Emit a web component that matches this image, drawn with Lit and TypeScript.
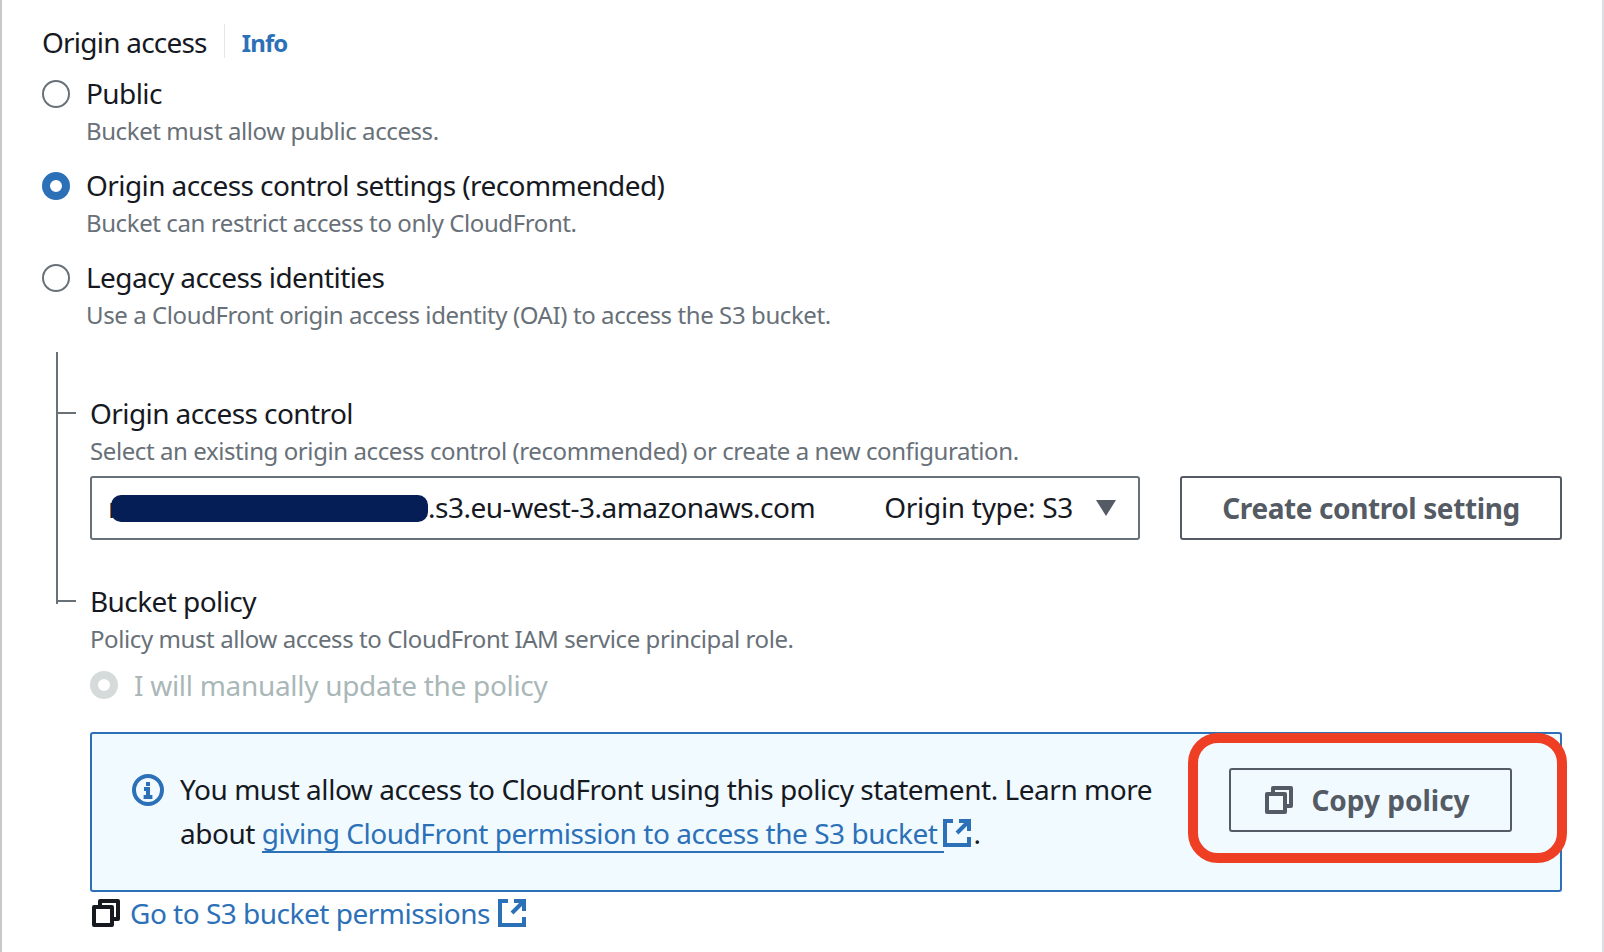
import { LitElement, html, css, svg } from "lit";
import { customElement } from "lit/decorators.js";

const copyIcon = (cls: string) => html`<svg class="ico ${cls}" viewBox="0 0 16 16" fill="none" stroke="currentColor" stroke-width="2" stroke-linejoin="round">${svg`<path d="M2 5h9v9H2z"/><path d="M5 5V2h9v9h-3"/>`}</svg>`;
const extIcon = html`<svg class="ico ext" viewBox="0 0 16 16" fill="none" stroke="currentColor" stroke-width="2">${svg`<path d="M9 2h5v5"/><path d="M14 2L8 8"/><path d="M6 2H2v12h12v-4"/>`}</svg>`;
const infoIcon = html`<svg class="ico info" viewBox="0 0 16 16" fill="none" stroke="currentColor" stroke-width="2">${svg`<circle cx="8" cy="8" r="7"/><path d="M8 11.5V7.5H6"/><path d="M10.2 11.5H5.8"/><path d="M7 5h2" stroke-width="2"/>`}</svg>`;

@customElement("app-root")
export class AppRoot extends LitElement {
  static styles = css`
    :host {
      display: block;
      width: 1604px;
      height: 952px;
      box-sizing: border-box;
      background: #fff;
      border-left: 2px solid #c6cacd;
      border-right: 2px solid #dcdfe1;
      padding: 24px 0 0 40px;
      overflow: hidden;
      font-family: "Noto Sans", sans-serif;
      font-size: 28px;
      letter-spacing: -0.58px;
      color: #16191f;
    }
    .head { display: flex; align-items: center; height: 34px; margin-bottom: 17px; }
    .head .t { line-height: 38px; padding-top: 1px; letter-spacing: -0.78px; }
    .sep { width: 1px; height: 34px; background: #e4e7e9; margin: 0 17px; }
    .info-link { color: #2c71b8; font-weight: 700; font-size: 24px; letter-spacing: -0.9px; padding-top: 3px; }
    .opt { display: flex; margin-bottom: 16px; }
    .radio {
      width: 28px; height: 28px; box-sizing: border-box; border-radius: 50%;
      border: 2px solid #687078; margin: 5px 16px 0 0; flex: none; background: #fff;
    }
    .radio.on { border: 8.5px solid #2c71b8; }
    .radio.off { border: 8.5px solid #d5dbdb; margin-right: 16px; }
    .l { line-height: 36px; padding-bottom: 2px; }
    .d { line-height: 36px; padding-bottom: 2px; color: #687078; font-size: 24px; letter-spacing: -0.41px; }
    .tree { position: relative; margin: 17px 0 0 48px; padding-top: 43px; }
    .tree::before {
      content: ""; position: absolute; left: -34px; top: 0; width: 2px; height: 252px; background: #687078;
    }
    .title { position: relative; }
    .title::before {
      content: ""; position: absolute; left: -34px; top: 17px; width: 20px; height: 2px; background: #687078;
    }
    .row { display: flex; gap: 40px; width: 1472px; margin-top: 5px; height: 64px; }
    .select {
      flex: 1; display: flex; align-items: center; box-sizing: border-box; padding: 0 22px 2px 16px;
      border: 2px solid #687078; border-radius: 3px; letter-spacing: -0.5px;
    }
    .redact { width: 317px; height: 27px; margin-top: 2px; background: #051f56; border-radius: 10px; margin-left: -8px; flex: none; }
    .type { margin-left: auto; letter-spacing: -0.3px; }
    .caret {
      margin-left: 23px; margin-top: 2px; width: 0; height: 0; border-left: 10px solid transparent;
      border-right: 10px solid transparent; border-top: 16px solid #545b64;
    }
    .btn {
      display: flex; align-items: center; justify-content: center; box-sizing: border-box;
      border: 2px solid #545b64; border-radius: 3px; color: #545b64; font-weight: 700;
    }
    .create { width: 382px; letter-spacing: -0.4px; }
    .bp { margin-top: 43px; }
    .dis { display: flex; margin-top: 8px; color: #aab7b8; letter-spacing: -0.3px; }
    .dis .radio { margin-top: 4px; }
    .box {
      position: relative; display: flex; align-items: flex-start; box-sizing: border-box;
      width: 1472px; height: 160px; margin-top: 27px; padding: 34px 48px 0 40px;
      background: #f1faff; border: 2px solid #2c71b8; border-radius: 3px;
    }
    .ico { display: block; flex: none; }
    .info { width: 32px; height: 32px; color: #2c71b8; margin: 6px 16px 0 0; }
    .msg { flex: 1; margin-top: -1px; line-height: 44px; white-space: nowrap; letter-spacing: -0.46px; }
    a { color: #2c71b8; text-decoration: none; }
    .ulink { display: inline-block; line-height: 36px; border-bottom: 2px solid #2c71b8; padding-right: 7px; }
    .ext { width: 32px; height: 32px; color: #2c71b8; }
    .inl { display: inline-block; vertical-align: -5px; margin-left: -3px; }
    .copybtn { width: 283px; height: 64px; gap: 16px; flex: none; padding-right: 8px; letter-spacing: 0; }
    .copy1 { width: 32px; height: 32px; }
    .highlight {
      position: absolute; left: 1096px; top: -1px; width: 379px; height: 130px; box-sizing: border-box;
      border: 10px solid #ee3f24; border-radius: 30px;
    }
    .go { display: flex; align-items: center; height: 38px; margin-top: 2px; color: #2c71b8; letter-spacing: -0.5px; }
    .copy2 { width: 32px; height: 32px; color: #16191f; margin-right: 8px; }
    .go .ext { margin-left: 6px; }
  `;

  private opt(label: string, desc: string, on = false) {
    return html`<div class="opt">
      <div class="radio ${on ? "on" : ""}"></div>
      <div><div class="l">${label}</div><div class="d">${desc}</div></div>
    </div>`;
  }

  render() {
    return html`
      <div class="head"><span class="t">Origin access</span><span class="sep"></span><a class="info-link">Info</a></div>
      ${this.opt("Public", "Bucket must allow public access.")}
      ${this.opt("Origin access control settings (recommended)", "Bucket can restrict access to only CloudFront.", true)}
      ${this.opt("Legacy access identities", "Use a CloudFront origin access identity (OAI) to access the S3 bucket.")}
      <div class="tree">
        <div class="l title">Origin access control</div>
        <div class="d">Select an existing origin access control (recommended) or create a new configuration.</div>
        <div class="row">
          <div class="select">
            <span>r</span><span class="redact"></span><span>.s3.eu-west-3.amazonaws.com</span>
            <span class="type">Origin type: S3</span><span class="caret"></span>
          </div>
          <div class="btn create">Create control setting</div>
        </div>
        <div class="l title bp">Bucket policy</div>
        <div class="d">Policy must allow access to CloudFront IAM service principal role.</div>
        <div class="dis"><div class="radio off"></div><div class="l">I will manually update the policy</div></div>
        <div class="box">
          ${infoIcon}
          <div class="msg">You must allow access to CloudFront using this policy statement. Learn more<br />about <a class="ulink">giving CloudFront permission to access the S3 bucket</a><span class="inl">${extIcon}</span>.</div>
          <div class="btn copybtn">${copyIcon("copy1")}<span>Copy policy</span></div>
          <div class="highlight"></div>
        </div>
        <div class="go">${copyIcon("copy2")}<a>Go to S3 bucket permissions</a>${extIcon}</div>
      </div>
    `;
  }
}
